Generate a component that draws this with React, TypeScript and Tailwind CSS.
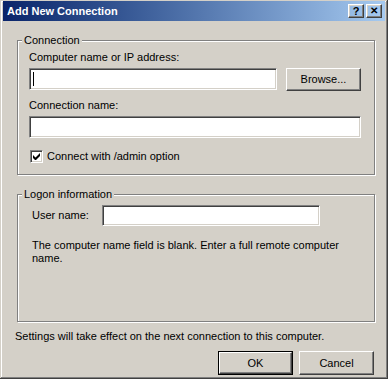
import React from "react"

const font = { fontFamily: "'Liberation Sans', Arial, sans-serif" }

function Sunken({ className }: { className: string }) {
  // classic sunken edit box
  return (
    <div
      className={`border border-[#808080] border-b-white border-r-white bg-white shadow-[inset_1px_1px_0_#404040,inset_-1px_-1px_0_#d4d0c8] ${className}`}
    />
  )
}

function Button({ label, isDefault, className }: { label: string; isDefault?: boolean; className: string }) {
  if (isDefault) {
    return (
      <div className={`border border-black ${className}`}>
        <div className="flex h-full w-full items-center justify-center border border-white border-b-[#404040] border-r-[#404040] shadow-[inset_-1px_-1px_0_#808080]">
          {label}
        </div>
      </div>
    )
  }
  return (
    <div
      className={`flex items-center justify-center border border-white border-b-[#404040] border-r-[#404040] shadow-[inset_-1px_-1px_0_#808080,inset_1px_1px_0_#d4d0c8] ${className}`}
    >
      {label}
    </div>
  )
}

function GroupBox({ title, className, children }: { title: string; className: string; children: React.ReactNode }) {
  return (
    <div className={`relative border border-[#808080] shadow-[1px_1px_0_#fff,inset_1px_1px_0_#fff] ${className}`}>
      <span className="absolute -top-[8px] left-[4px] bg-[#d4d0c8] px-[2px] leading-[14px]">{title}</span>
      {children}
    </div>
  )
}

export default function App() {
  return (
    <div
      className="h-[379px] w-[388px] bg-[#d4d0c8] p-[3px] pt-[1px] text-[11px] leading-[13px] text-black shadow-[inset_-1px_-1px_0_#404040,inset_1px_1px_0_#d4d0c8,inset_-2px_-2px_0_#808080,inset_2px_2px_0_#fff]"
      style={font}
    >
      {/* title bar */}
      <div className="flex h-[20px] items-center justify-between bg-gradient-to-r from-[#0a246a] to-[#a6caf0] pl-[4px] pr-[3px]">
        <span className="font-bold text-white">Add New Connection</span>
        <div className="flex gap-[2px]">
          <Button label="?" className="h-[14px] w-[16px] font-bold leading-none" />
          <Button label="✕" className="h-[14px] w-[16px] text-[10px] font-bold leading-none" />
        </div>
      </div>

      <div className="flex flex-col pl-[14px] pr-[10px] pt-[19px]">
        <GroupBox title="Connection" className="h-[135px]">
          <div className="flex flex-col pl-[11px] pr-[13px] pt-[10px]">
            <span>Computer name or IP address:</span>
            <div className="mt-[4px] flex gap-[9px]">
              <div className="relative h-[22px] w-[248px]">
                <Sunken className="h-full w-full" />
                <div className="absolute left-[4px] top-[4px] h-[14px] w-px bg-black" />
              </div>
              <Button label="Browse..." className="h-[23px] flex-1" />
            </div>
            <span className="mt-[8px]">Connection name:</span>
            <Sunken className="mt-[4px] h-[22px] w-full" />
            <div className="mt-[12px] flex items-center gap-[4px] pl-[1px]">
              <div className="flex h-[13px] w-[13px] items-center justify-center border border-[#808080] border-b-white border-r-white bg-white shadow-[inset_1px_1px_0_#404040,inset_-1px_-1px_0_#d4d0c8]">
                <svg width="7" height="7" viewBox="0 0 7 7">
                  <path d="M0 2v3l2 2h1l4-4V0L2.5 4.5z" fill="#000" />
                </svg>
              </div>
              <span>Connect with /admin option</span>
            </div>
          </div>
        </GroupBox>

        <GroupBox title="Logon information" className="mt-[19px] h-[128px]">
          <div className="flex flex-col pl-[14px] pr-[54px] pt-[10px]">
            <div className="flex items-center">
              <span className="w-[70px]">User name:</span>
              <Sunken className="h-[21px] flex-1" />
            </div>
            <p className="mt-[13px] w-[322px]">
              The computer name field is blank. Enter a full remote computer name.
            </p>
          </div>
        </GroupBox>

        <span className="mt-[8px] -ml-[2px]">Settings will take effect on the next connection to this computer.</span>

        <div className="mt-[8px] flex justify-end gap-[6px] pr-[1px]">
          <Button label="OK" isDefault className="h-[24px] w-[75px]" />
          <Button label="Cancel" className="h-[24px] w-[75px]" />
        </div>
      </div>
    </div>
  )
}
